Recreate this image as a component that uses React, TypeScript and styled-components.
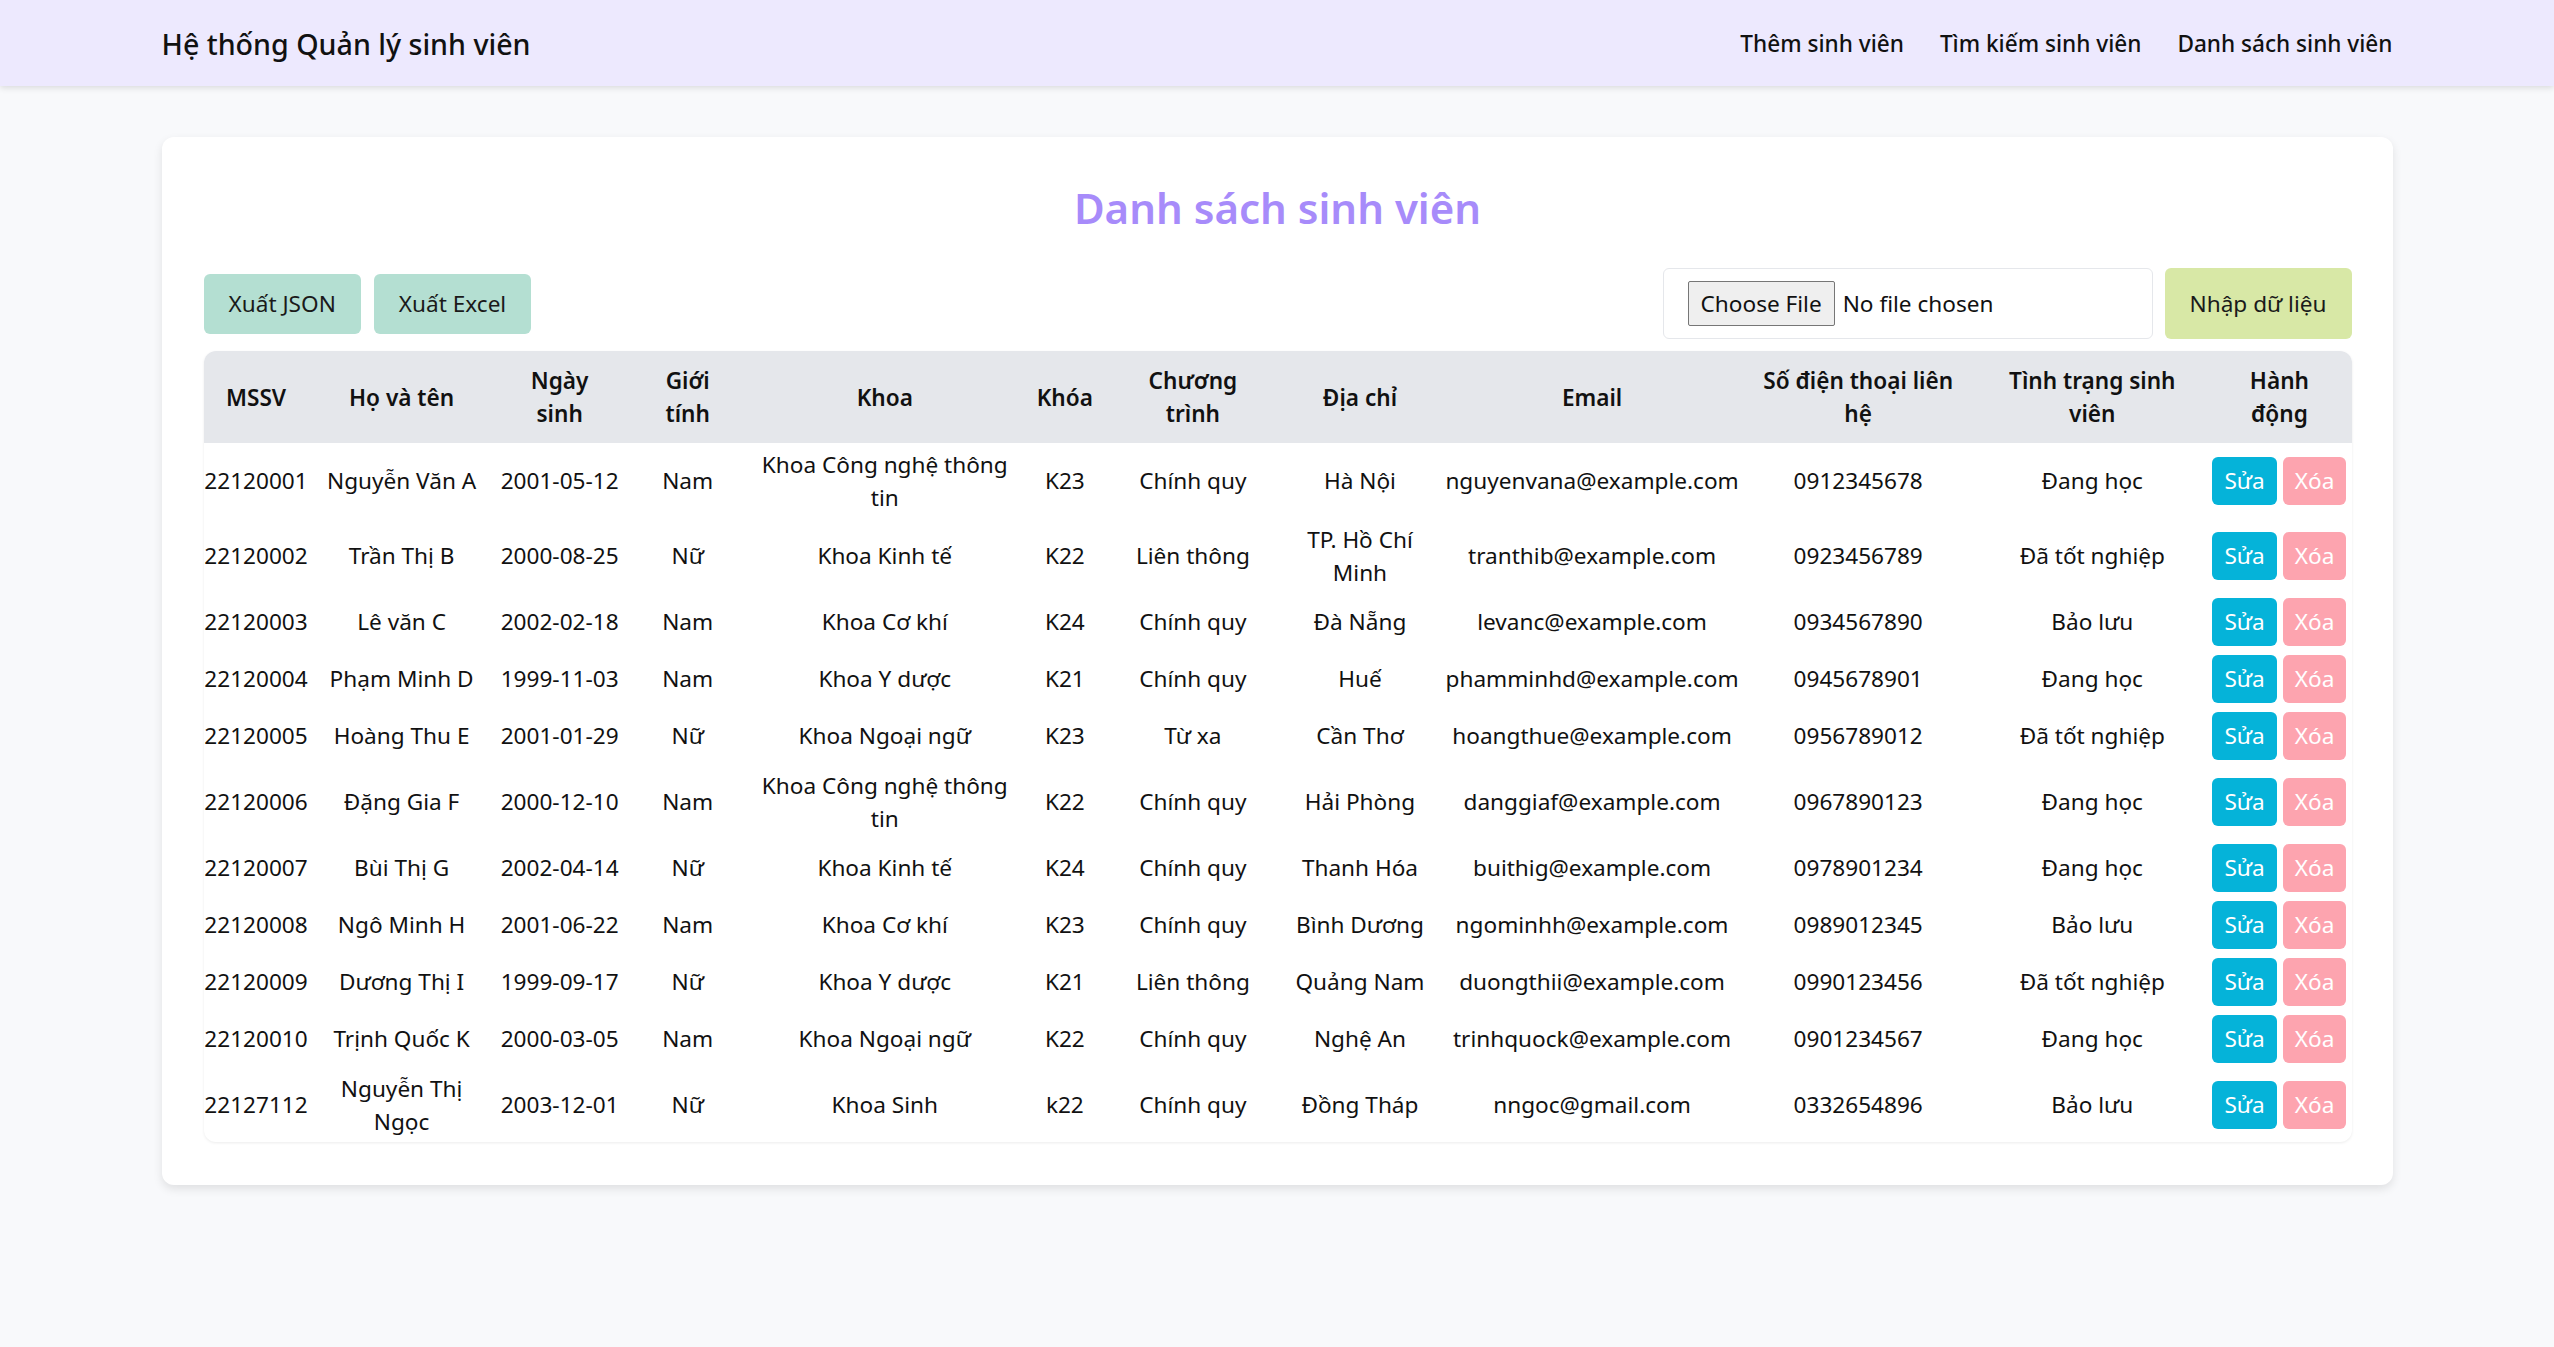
import React from "react";
import styled, { createGlobalStyle } from "styled-components";

const FONT = `"Noto Sans", "Open Sans", "DejaVu Sans", sans-serif`;

const GlobalStyle = createGlobalStyle`
  html, body {
    margin: 0;
    padding: 0;
    background: #f8f9fb;
    font-family: ${FONT};
    color: #111111;
  }
  * { box-sizing: border-box; }
`;

const Page = styled.div`
  min-height: 100vh;
  background: #f8f9fb;
`;

const NavBar = styled.header`
  height: 86px;
  background: #ede9fe;
  box-shadow: 0 2px 6px rgba(0, 0, 0, 0.12);
`;

const NavInner = styled.div`
  max-width: 2231px;
  height: 100%;
  margin: 0 auto;
  display: flex;
  align-items: center;
  justify-content: space-between;
`;

const Brand = styled.div`
  font-size: 28.6px;
  font-weight: 500;
  color: #111;
`;

const NavLinks = styled.nav`
  display: flex;
  gap: 36px;
`;

const NavLink = styled.a`
  font-size: 22.6px;
  font-weight: 500;
  color: #111;
  text-decoration: none;
  cursor: pointer;
`;

const Card = styled.main`
  max-width: 2231px;
  margin: 51px auto 0;
  background: #ffffff;
  border-radius: 12px;
  box-shadow: 0 4px 10px rgba(0, 0, 0, 0.1);
  padding: 44px 41px 43px 42px;
`;

const Title = styled.h1`
  margin: 0 0 33px;
  text-align: center;
  font-size: 42px;
  line-height: 54px;
  font-weight: 600;
  color: #a78bfa;
`;

const Toolbar = styled.div`
  display: flex;
  align-items: center;
  justify-content: space-between;
  height: 71px;
  margin-bottom: 12px;
`;

const Group = styled.div<{ $gap: number }>`
  display: flex;
  align-items: center;
  gap: ${(p) => p.$gap}px;
`;

const ActionButton = styled.button<{ $bg: string; $h: number }>`
  height: ${(p) => p.$h}px;
  padding: 0 25px;
  border: none;
  border-radius: 6px;
  background: ${(p) => p.$bg};
  color: #1a1a1a;
  font-family: ${FONT};
  font-size: 22.6px;
  cursor: pointer;
`;

const FileBox = styled.label`
  width: 490px;
  height: 71px;
  display: flex;
  align-items: center;
  padding: 0 24px;
  border: 1px solid #e5e7eb;
  border-radius: 6px;
  background: #fff;
`;

const FileInput = styled.input`
  font-family: ${FONT};
  font-size: 22.6px;
  color: #111;
  width: 100%;

  &::file-selector-button {
    font-family: ${FONT};
    font-size: 22.6px;
    height: 45px;
    padding: 0 12px;
    margin-right: 8px;
    background: #efefef;
    border: 1px solid #767676;
    border-radius: 2px;
    color: #111;
  }
`;

const TableWrap = styled.div`
  border-radius: 12px;
  overflow: hidden;
  box-shadow: 0 1px 3px rgba(0, 0, 0, 0.08);
`;

const Table = styled.table`
  width: 100%;
  border-collapse: collapse;
  table-layout: fixed;
  font-size: 22.6px;
`;

const HeadRow = styled.tr`
  background: #e5e7eb;
`;

const Th = styled.th`
  padding: 13px 0;
  line-height: 33px;
  font-weight: 600;
  text-align: center;
  white-space: pre-line;
  color: #111;
`;

const Td = styled.td`
  padding: 4.5px 0;
  line-height: 33px;
  text-align: center;
  white-space: pre-line;
  vertical-align: middle;
  color: #111;
`;

const RowActions = styled.div`
  display: flex;
  justify-content: center;
  gap: 6px;
`;

const SmallButton = styled.button<{ $bg: string }>`
  height: 48px;
  padding: 0 12px;
  border: none;
  border-radius: 6px;
  background: ${(p) => p.$bg};
  color: #ffffff;
  font-family: ${FONT};
  font-size: 22.6px;
  cursor: pointer;
`;

const colWidths = [105, 186, 130, 126, 268, 92, 164, 170, 294, 238, 230, 144];

const headers = [
  "MSSV",
  "Họ và tên",
  "Ngày\nsinh",
  "Giới\ntính",
  "Khoa",
  "Khóa",
  "Chương\ntrình",
  "Địa chỉ",
  "Email",
  "Số điện thoại liên\nhệ",
  "Tình trạng sinh\nviên",
  "Hành\nđộng",
];

const students: string[][] = [
  ["22120001", "Nguyễn Văn A", "2001-05-12", "Nam", "Khoa Công nghệ thông\ntin", "K23", "Chính quy", "Hà Nội", "nguyenvana@example.com", "0912345678", "Đang học"],
  ["22120002", "Trần Thị B", "2000-08-25", "Nữ", "Khoa Kinh tế", "K22", "Liên thông", "TP. Hồ Chí\nMinh", "tranthib@example.com", "0923456789", "Đã tốt nghiệp"],
  ["22120003", "Lê văn C", "2002-02-18", "Nam", "Khoa Cơ khí", "K24", "Chính quy", "Đà Nẵng", "levanc@example.com", "0934567890", "Bảo lưu"],
  ["22120004", "Phạm Minh D", "1999-11-03", "Nam", "Khoa Y dược", "K21", "Chính quy", "Huế", "phamminhd@example.com", "0945678901", "Đang học"],
  ["22120005", "Hoàng Thu E", "2001-01-29", "Nữ", "Khoa Ngoại ngữ", "K23", "Từ xa", "Cần Thơ", "hoangthue@example.com", "0956789012", "Đã tốt nghiệp"],
  ["22120006", "Đặng Gia F", "2000-12-10", "Nam", "Khoa Công nghệ thông\ntin", "K22", "Chính quy", "Hải Phòng", "danggiaf@example.com", "0967890123", "Đang học"],
  ["22120007", "Bùi Thị G", "2002-04-14", "Nữ", "Khoa Kinh tế", "K24", "Chính quy", "Thanh Hóa", "buithig@example.com", "0978901234", "Đang học"],
  ["22120008", "Ngô Minh H", "2001-06-22", "Nam", "Khoa Cơ khí", "K23", "Chính quy", "Bình Dương", "ngominhh@example.com", "0989012345", "Bảo lưu"],
  ["22120009", "Dương Thị I", "1999-09-17", "Nữ", "Khoa Y dược", "K21", "Liên thông", "Quảng Nam", "duongthii@example.com", "0990123456", "Đã tốt nghiệp"],
  ["22120010", "Trịnh Quốc K", "2000-03-05", "Nam", "Khoa Ngoại ngữ", "K22", "Chính quy", "Nghệ An", "trinhquock@example.com", "0901234567", "Đang học"],
  ["22127112", "Nguyễn Thị\nNgọc", "2003-12-01", "Nữ", "Khoa Sinh", "k22", "Chính quy", "Đồng Tháp", "nngoc@gmail.com", "0332654896", "Bảo lưu"],
];

export default function App() {
  return (
    <Page>
      <GlobalStyle />
      <NavBar>
        <NavInner>
          <Brand>Hệ thống Quản lý sinh viên</Brand>
          <NavLinks>
            <NavLink>Thêm sinh viên</NavLink>
            <NavLink>Tìm kiếm sinh viên</NavLink>
            <NavLink>Danh sách sinh viên</NavLink>
          </NavLinks>
        </NavInner>
      </NavBar>
      <Card>
        <Title>Danh sách sinh viên</Title>
        <Toolbar>
          <Group $gap={13}>
            <ActionButton $bg="#b4dfd2" $h={60}>Xuất JSON</ActionButton>
            <ActionButton $bg="#b4dfd2" $h={60}>Xuất Excel</ActionButton>
          </Group>
          <Group $gap={12}>
            <FileBox>
              <FileInput type="file" />
            </FileBox>
            <ActionButton $bg="#d8e8a6" $h={71}>Nhập dữ liệu</ActionButton>
          </Group>
        </Toolbar>
        <TableWrap>
          <Table>
            <colgroup>
              {colWidths.map((w, i) => (
                <col key={i} style={{ width: w }} />
              ))}
            </colgroup>
            <thead>
              <HeadRow>
                {headers.map((h) => (
                  <Th key={h}>{h}</Th>
                ))}
              </HeadRow>
            </thead>
            <tbody>
              {students.map((s) => (
                <tr key={s[0]}>
                  {s.map((v, i) => (
                    <Td key={i}>{v}</Td>
                  ))}
                  <Td>
                    <RowActions>
                      <SmallButton $bg="#05b3d9">Sửa</SmallButton>
                      <SmallButton $bg="#fda4af">Xóa</SmallButton>
                    </RowActions>
                  </Td>
                </tr>
              ))}
            </tbody>
          </Table>
        </TableWrap>
      </Card>
    </Page>
  );
}
